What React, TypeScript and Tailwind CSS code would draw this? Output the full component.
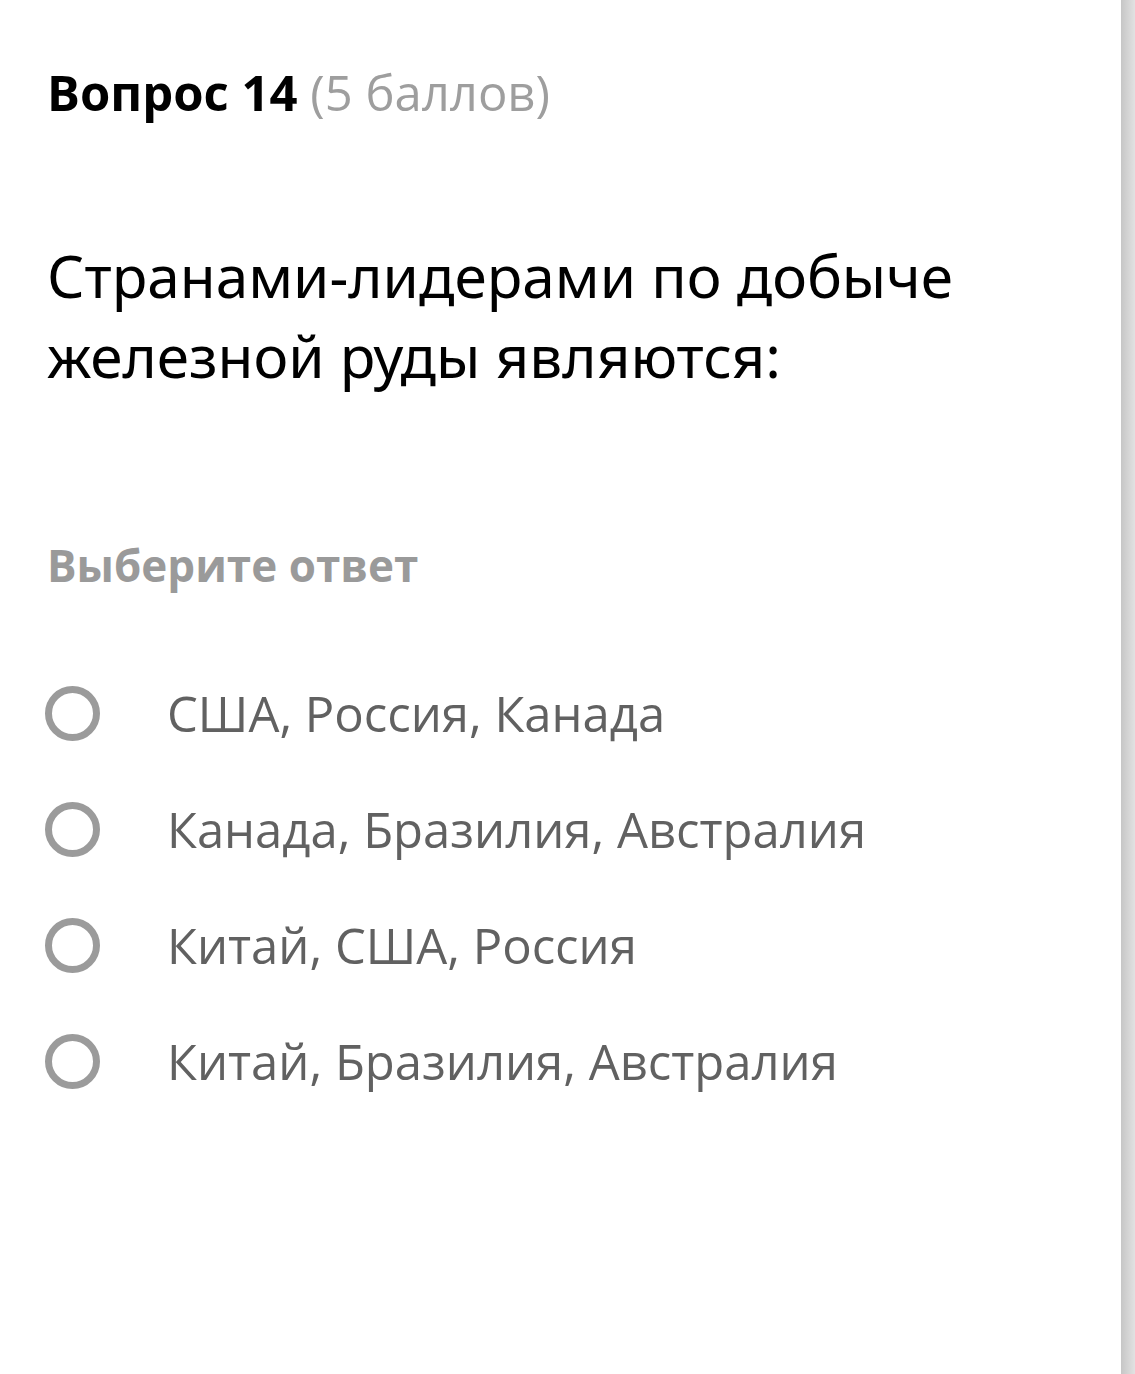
export default function App() {
  const options = [
    "США, Россия, Канада",
    "Канада, Бразилия, Австралия",
    "Китай, США, Россия",
    "Китай, Бразилия, Австралия",
  ];
  return (
    <div className="flex w-[1135px] h-[1374px] bg-white" style={{ fontFamily: '"Open Sans", "Noto Sans", sans-serif' }}>
      <div className="flex-1 flex flex-col pl-[47px] pt-[59px]">
        <div className="text-[49px] leading-[66px] whitespace-nowrap">
          <span className="font-bold text-black">Вопрос 14</span>{" "}
          <span className="text-[#9e9e9e]">(5 баллов)</span>
        </div>
        <div className="mt-[110px] text-[58.5px] leading-[80px] text-black" style={{ fontFamily: '"Noto Sans", sans-serif' }}>
          Странами-лидерами по добыче
          <br />
          железной руды являются:
        </div>
        <div className="mt-[140px] text-[44px] leading-[60px] font-bold text-[#9a9a9a]">Выберите ответ</div>
        <div className="mt-[80px] flex flex-col gap-[40px]">
          {options.map((o) => (
            <div key={o} className="flex items-center h-[76px]">
              <div className="w-[55px] h-[55px] rounded-full border-[7px] border-[#9b9b9b] shrink-0 -ml-[2px]" />
              <div className="ml-[67px] text-[49px] leading-[66px] text-[#616161] whitespace-nowrap">{o}</div>
            </div>
          ))}
        </div>
      </div>
      <div className="w-[14px] h-full bg-gradient-to-r from-[#c6c6c6] to-[#e2e2e2]" />
    </div>
  );
}
